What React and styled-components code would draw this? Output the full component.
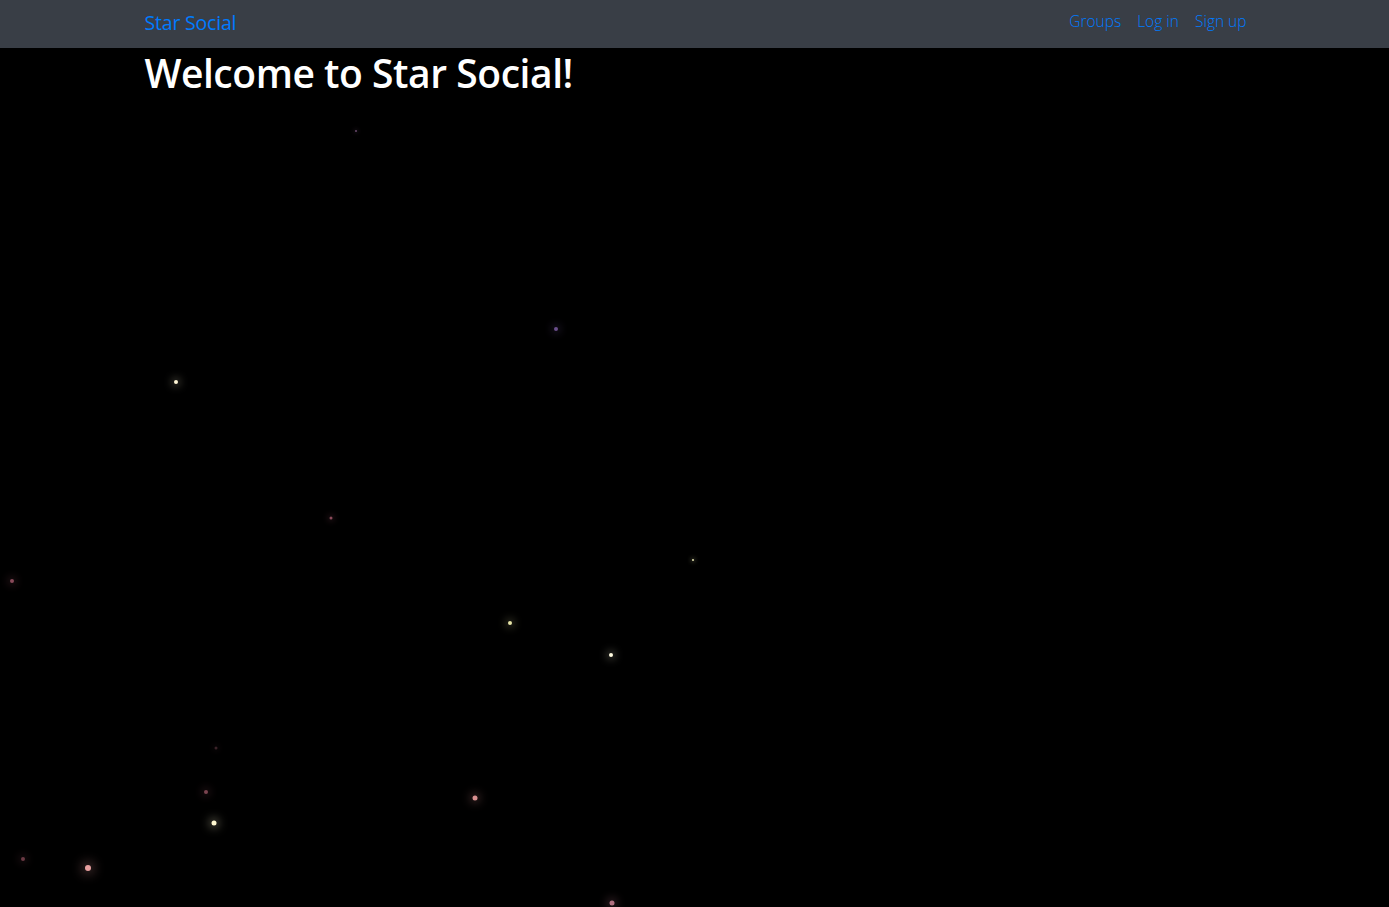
import styled, { createGlobalStyle } from "styled-components";

const GlobalStyle = createGlobalStyle`
  html, body {
    margin: 0;
    padding: 0;
    background: #000;
    font-family: "Open Sans", "Noto Sans", sans-serif;
  }
`;

const Page = styled.div`
  position: relative;
  min-height: 907px;
  background: #000;
  overflow: hidden;
`;

const Navbar = styled.nav`
  height: 48px;
  background-color: #393e46;
  display: flex;
  align-items: center;
`;

const Container = styled.div`
  width: 1104px;
  margin: 0 auto;
  display: flex;
  align-items: center;
  justify-content: space-between;
`;

const Brand = styled.a`
  color: #007bff;
  font-size: 19.5px;
  font-weight: 400;
  letter-spacing: -0.2px;
  text-decoration: none;
  padding-left: 2px;
  margin-top: -3px;
`;

const NavLinks = styled.div`
  display: flex;
  gap: 16px;
  margin-top: -7px;
`;

const NavLink = styled.a`
  color: #007bff;
  font-size: 15.5px;
  font-weight: 300;
  text-decoration: none;
`;

const Main = styled.main`
  width: 1104px;
  margin: 0 auto;
  position: relative;
  z-index: 1;
`;

const Title = styled.h1`
  margin: -2px 0 0;
  padding-left: 2px;
  color: #fff;
  font-size: 39px;
  font-weight: 600;
  letter-spacing: -0.45px;
`;

const Star = styled.span`
  position: absolute;
  border-radius: 50%;
  transform: translate(-50%, -50%);
  width: ${(p) => p.size}px;
  height: ${(p) => p.size}px;
  background: ${(p) => p.color};
  box-shadow: 0 0 ${(p) => p.size * 2}px ${(p) => p.size / 2}px ${(p) => p.glow};
`;

const stars = [
  { x: 356, y: 131, size: 2, color: "#6a4b6e", glow: "rgba(106,75,110,0.3)" },
  { x: 556, y: 329, size: 4, color: "#6b4f8c", glow: "rgba(107,79,140,0.35)" },
  { x: 176, y: 382, size: 4, color: "#fff7d6", glow: "rgba(255,247,214,0.3)" },
  { x: 331, y: 518, size: 3, color: "#8a4a5a", glow: "rgba(138,74,90,0.35)" },
  { x: 12, y: 581, size: 4, color: "#8a4a5a", glow: "rgba(138,74,90,0.35)" },
  { x: 693, y: 560, size: 2, color: "#e6e4b0", glow: "rgba(230,228,176,0.35)" },
  { x: 510, y: 623, size: 4, color: "#e8e6a8", glow: "rgba(232,230,168,0.3)" },
  { x: 611, y: 655, size: 4, color: "#fffbe0", glow: "rgba(255,251,224,0.3)" },
  { x: 216, y: 748, size: 3, color: "#3a2228", glow: "rgba(58,34,40,0.3)" },
  { x: 206, y: 792, size: 4, color: "#7a4450", glow: "rgba(122,68,80,0.35)" },
  { x: 475, y: 798, size: 5, color: "#d89090", glow: "rgba(216,144,144,0.3)" },
  { x: 214, y: 823, size: 5, color: "#fff8d0", glow: "rgba(255,248,208,0.35)" },
  { x: 23, y: 859, size: 4, color: "#6b3a44", glow: "rgba(107,58,68,0.35)" },
  { x: 88, y: 868, size: 6, color: "#e8a0a0", glow: "rgba(232,160,160,0.35)" },
  { x: 612, y: 903, size: 5, color: "#b07080", glow: "rgba(176,112,128,0.35)" },
];

export default function App() {
  return (
    <Page>
      <GlobalStyle />
      <Navbar>
        <Container>
          <Brand href="#">Star Social</Brand>
          <NavLinks>
            <NavLink href="#">Groups</NavLink>
            <NavLink href="#">Log in</NavLink>
            <NavLink href="#">Sign up</NavLink>
          </NavLinks>
        </Container>
      </Navbar>
      <Main>
        <Title>Welcome to Star Social!</Title>
      </Main>
      {stars.map((s, i) => (
        <Star
          key={i}
          size={s.size}
          color={s.color}
          glow={s.glow}
          style={{ left: s.x, top: s.y }}
        />
      ))}
    </Page>
  );
}
